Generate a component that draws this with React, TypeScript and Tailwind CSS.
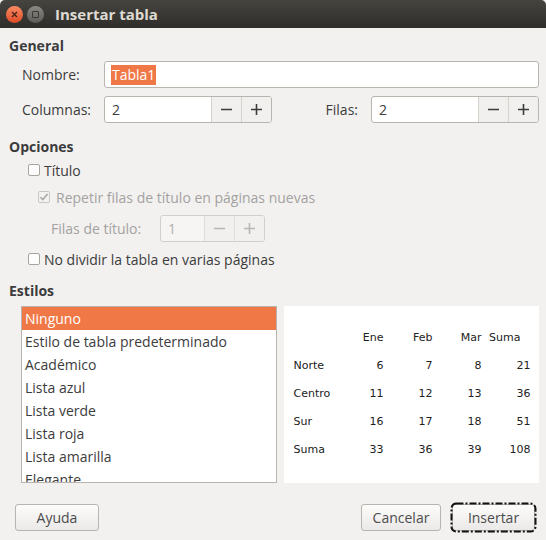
import React from "react"

const font = { fontFamily: '"Open Sans", "Noto Sans", sans-serif' }

function Spin({ value, width, disabled }: { value: string; width: string; disabled?: boolean }) {
  const txt = disabled ? "text-[#b0aeab]" : "text-[#3c3c3c]"
  return (
    <div
      className={`flex h-[27px] ${width} overflow-hidden rounded-[3px] border ${
        disabled ? "border-[#d3d0cb] bg-[#f6f5f4]" : "border-[#b9b5ae] bg-white"
      }`}
    >
      <div className={`flex flex-1 items-center pl-[7px] text-[14px] ${txt}`}>{value}</div>
      <div className={`flex w-[30px] items-center justify-center border-l ${disabled ? "border-[#e0ddd9]" : "border-[#d6d3ce]"} bg-[#f1f0ef]`}>
        <svg width="11" height="11" viewBox="0 0 11 11">
          <path d="M0 5.5h11" stroke={disabled ? "#b8b6b2" : "#3c3c3c"} strokeWidth="1.6" />
        </svg>
      </div>
      <div className={`flex w-[30px] items-center justify-center border-l ${disabled ? "border-[#e0ddd9]" : "border-[#d6d3ce]"} bg-[#f1f0ef]`}>
        <svg width="11" height="11" viewBox="0 0 11 11">
          <path d="M0 5.5h11M5.5 0v11" stroke={disabled ? "#b8b6b2" : "#3c3c3c"} strokeWidth="1.6" />
        </svg>
      </div>
    </div>
  )
}

function Check({ checked, disabled }: { checked?: boolean; disabled?: boolean }) {
  return (
    <span
      className={`flex h-[12px] w-[12px] items-center justify-center rounded-[2px] border ${
        disabled ? "border-[#c9c6c1] bg-[#f3f2f1]" : "border-[#a8a49d] bg-[#fdfdfd]"
      }`}
    >
      {checked && (
        <svg width="10" height="10" viewBox="0 0 10 10">
          <path d="M1.5 5.2l2.3 2.4L8.6 2" fill="none" stroke={disabled ? "#a9a7a3" : "#3c3c3c"} strokeWidth="1.6" />
        </svg>
      )}
    </span>
  )
}

function Button({ children, width }: { children: React.ReactNode; width: string }) {
  return (
    <div
      className={`flex h-[27px] ${width} items-center justify-center rounded-[3px] border border-[#b9b5ae] bg-gradient-to-b from-[#fcfcfb] to-[#ebe9e7] text-[14px] text-[#4c4c4c]`}
    >
      {children}
    </div>
  )
}

const styles = [
  "Ninguno",
  "Estilo de tabla predeterminado",
  "Académico",
  "Lista azul",
  "Lista verde",
  "Lista roja",
  "Lista amarilla",
  "Elegante",
]

const rows = [
  ["Norte", "6", "7", "8", "21"],
  ["Centro", "11", "12", "13", "36"],
  ["Sur", "16", "17", "18", "51"],
  ["Suma", "33", "36", "39", "108"],
]

export default function App() {
  return (
    <div className="flex h-[540px] w-[546px] flex-col overflow-hidden bg-[#f2f1f0] text-[#3c3c3c]" style={font}>
      {/* title bar */}
      <div className="flex h-[28px] shrink-0 items-center rounded-t-[5px] bg-gradient-to-b from-[#45443f] to-[#2f2e2b]">
        <div className="ml-[6px] flex h-[17px] w-[17px] items-center justify-center rounded-full bg-gradient-to-b from-[#f78a62] to-[#df4a25]">
          <svg width="7" height="7" viewBox="0 0 7 7">
            <path d="M1 1l5 5M6 1L1 6" stroke="#4a2419" strokeWidth="1.4" />
          </svg>
        </div>
        <div className="ml-[4px] flex h-[17px] w-[17px] items-center justify-center rounded-full bg-gradient-to-b from-[#8b8984] to-[#5e5c58]">
          <span className="h-[7px] w-[7px] rounded-[1px] border border-[#3a3935]" />
        </div>
        <span className="ml-[11px] text-[15px] font-bold text-[#dfdbd2]">Insertar tabla</span>
      </div>

      <div className="flex flex-1 flex-col pl-[9px] pr-[7px]">
        <div className="mt-[8px] h-[20px] text-[14px] font-bold leading-[20px]">General</div>

        <div className="mt-[5px] flex items-center pl-[13px]">
          <span className="w-[82px] text-[14px]">Nombre:</span>
          <div className="flex h-[27px] flex-1 items-center rounded-[3px] border border-[#b9b5ae] bg-white pl-[6px]">
            <span className="bg-[#f07746] px-[1px] text-[14px] leading-[20px] text-white">Tabla1</span>
          </div>
        </div>

        <div className="mt-[8px] flex items-center pl-[13px]">
          <span className="w-[82px] text-[14px]">Columnas:</span>
          <Spin value="2" width="w-[168px]" />
          <span className="ml-auto mr-[13px] text-[14px]">Filas:</span>
          <Spin value="2" width="w-[168px]" />
        </div>

        <div className="mt-[14px] h-[20px] text-[14px] font-bold leading-[20px]">Opciones</div>

        <label className="mt-[3px] flex h-[20px] items-center gap-[4px] pl-[19px] text-[14px]">
          <Check />
          Título
        </label>

        <label className="mt-[7px] flex h-[20px] items-center gap-[6px] pl-[29px] text-[14px] text-[#a4a2a0]">
          <Check checked disabled />
          Repetir filas de título en páginas nuevas
        </label>

        <div className="mt-[8px] flex items-center pl-[42px]">
          <span className="w-[109px] text-[14px] text-[#a4a2a0]">Filas de título:</span>
          <Spin value="1" width="w-[105px]" disabled />
        </div>

        <label className="mt-[7px] flex h-[20px] items-center gap-[4px] pl-[19px] text-[14px]">
          <Check />
          No dividir la tabla en varias páginas
        </label>

        <div className="mt-[12px] h-[20px] text-[14px] font-bold leading-[20px]">Estilos</div>

        <div className="mt-[5px] flex gap-[7px] pl-[12px]">
          <div className="h-[177px] w-[257px] overflow-hidden border border-[#b9b5ae] bg-white">
            {styles.map((s, i) => (
              <div
                key={s}
                className={`h-[23px] pl-[3px] text-[14px] leading-[23px] ${
                  i === 0 ? "bg-[#f07746] text-white" : "text-[#3c3c3c]"
                }`}
              >
                {s}
              </div>
            ))}
          </div>
          <div
            className="h-[177px] w-[255px] bg-white pl-[9px] pt-[18px] text-[11px] text-[#222]"
            style={{ fontFamily: '"DejaVu Sans", sans-serif' }}
          >
            <div className="grid grid-cols-[41px_49px_49px_49px_49px] auto-rows-[28px] items-center">
              <span />
              <span className="text-right">Ene</span>
              <span className="text-right">Feb</span>
              <span className="text-right">Mar</span>
              <span className="pr-[10px] text-right">Suma</span>
              {rows.map((r) =>
                r.map((c, j) => (
                  <span key={r[0] + j} className={j === 0 ? "text-left" : "text-right"}>
                    {c}
                  </span>
                ))
              )}
            </div>
          </div>
        </div>

        <div className="mt-[19px] flex items-center pl-[6px] pr-[2px]">
          <Button width="w-[84px]">Ayuda</Button>
          <div className="ml-auto">
            <Button width="w-[80px]">Cancelar</Button>
          </div>
          <div className="relative ml-[9px] flex h-[31px] w-[87px] items-center justify-center">
            <Button width="w-[83px]">Insertar</Button>
            <svg className="absolute inset-0" width="87" height="31" viewBox="0 0 87 31">
              <rect
                x="1.5"
                y="1.5"
                width="84"
                height="28"
                rx="5"
                fill="none"
                stroke="#111"
                strokeWidth="2"
                strokeDasharray="7 2 2 2"
              />
            </svg>
          </div>
        </div>
      </div>
    </div>
  )
}
